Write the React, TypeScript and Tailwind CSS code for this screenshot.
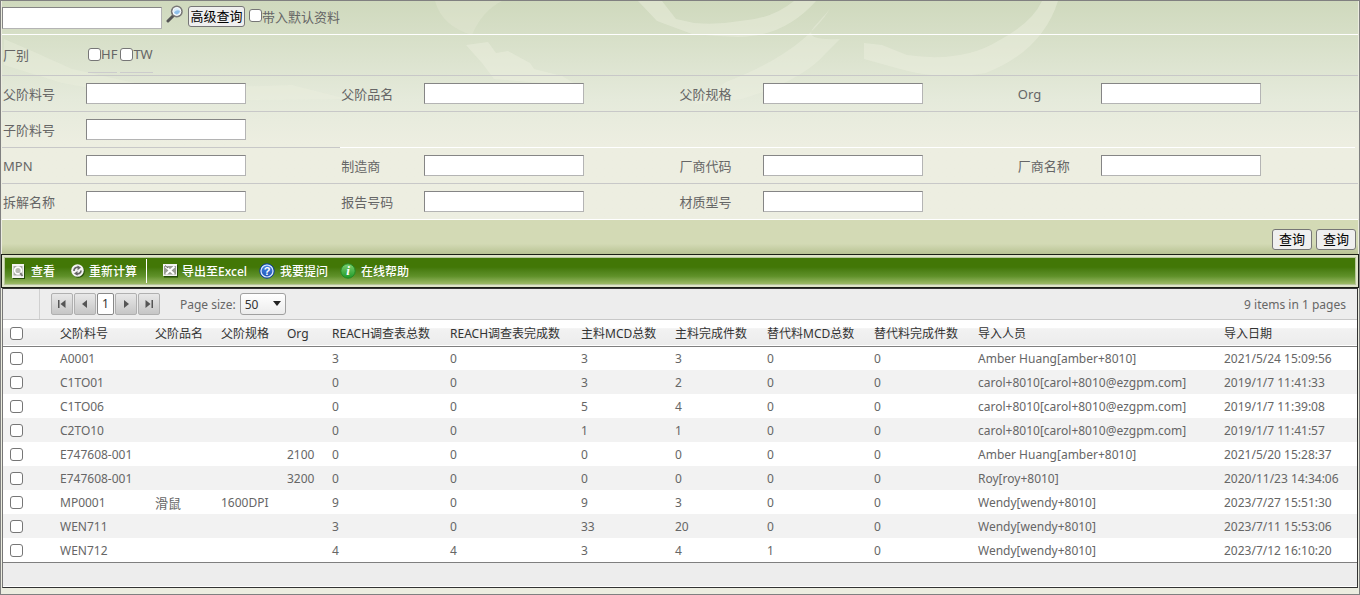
import React from "react";

const searchRows: { fields: string[]; line: string }[] = [
  { fields: ["父阶料号", "父阶品名", "父阶规格", "Org"], line: "border-[#c8c8c8]" },
  { fields: ["子阶料号"], line: "border-white" },
  { fields: ["MPN", "制造商", "厂商代码", "厂商名称"], line: "border-[#c8c8c8]" },
  { fields: ["拆解名称", "报告号码", "材质型号"], line: "border-white" },
];

const columns: [string, string][] = [
  ["父阶料号", "w-[95px]"],
  ["父阶品名", "w-[66px]"],
  ["父阶规格", "w-[66px]"],
  ["Org", "w-[45px]"],
  ["REACH调查表总数", "w-[118px]"],
  ["REACH调查表完成数", "w-[131px]"],
  ["主料MCD总数", "w-[94px]"],
  ["主料完成件数", "w-[92px]"],
  ["替代料MCD总数", "w-[107px]"],
  ["替代料完成件数", "w-[104px]"],
  ["导入人员", "w-auto"],
  ["导入日期", "w-[133px]"],
];

const carol = "carol+8010[carol+8010@ezgpm.com]";
const rows: string[][] = [
  ["A0001", "", "", "", "3", "0", "3", "3", "0", "0", "Amber Huang[amber+8010]", "2021/5/24 15:09:56"],
  ["C1TO01", "", "", "", "0", "0", "3", "2", "0", "0", carol, "2019/1/7 11:41:33"],
  ["C1TO06", "", "", "", "0", "0", "5", "4", "0", "0", carol, "2019/1/7 11:39:08"],
  ["C2TO10", "", "", "", "0", "0", "1", "1", "0", "0", carol, "2019/1/7 11:41:57"],
  ["E747608-001", "", "", "2100", "0", "0", "0", "0", "0", "0", "Amber Huang[amber+8010]", "2021/5/20 15:28:37"],
  ["E747608-001", "", "", "3200", "0", "0", "0", "0", "0", "0", "Roy[roy+8010]", "2020/11/23 14:34:06"],
  ["MP0001", "滑鼠", "1600DPI", "", "9", "0", "9", "3", "0", "0", "Wendy[wendy+8010]", "2023/7/27 15:51:30"],
  ["WEN711", "", "", "", "3", "0", "33", "20", "0", "0", "Wendy[wendy+8010]", "2023/7/11 15:53:06"],
  ["WEN712", "", "", "", "4", "4", "3", "4", "1", "0", "Wendy[wendy+8010]", "2023/7/12 16:10:20"],
];

const box = "block size-[13px] shrink-0 appearance-none rounded-[3px] border border-[#767676] bg-white checked:bg-[#0075ff]";
const textBox =
  "h-[21px] w-[160px] border border-t-[#858585] border-l-[#858585] border-r-[#b4b4b4] border-b-[#b4b4b4] bg-white px-1 text-[13px] outline-none";
const pushButton = "h-[21px] rounded-[3px] border border-[#767676] bg-[#efefef] text-[13px] leading-[19px] text-black";

function Backdrop() {
  return (
    <svg className="pointer-events-none absolute inset-0 -z-10 h-[150px] w-full" viewBox="0 0 1360 150" preserveAspectRatio="xMinYMin slice" aria-hidden="true">
      <g fill="#eef0e0">
        <path opacity=".25" d="M433 0H500Q480 10 470 34Q440 25 433 0Z" />
        <path opacity=".45" d="M464 44L486 41L494 52L506 50L528 62L532 68L560 75L575 84L540 82L492 78L480 62Z" />
        <path opacity=".45" d="M636 0H660L674 18L692 22Q715 24 738 20Q770 18 792 0H814Q782 36 736 36Q712 35 690 33L655 20Z" />
        <path opacity=".4" d="M828 8Q800 52 724 81L690 104L740 98Q800 80 824 52L838 38Q800 40 812 26Z" />
        <path opacity=".45" d="M862 42L880 44L905 54Q960 62 996 40Q1030 22 1040 0H1056Q1040 50 984 72Q940 80 898 68L862 58Z" />
        <path opacity=".35" d="M2 38L30 50L70 68L160 88L290 84L345 98L160 100L60 82L2 64Z" />
      </g>
    </svg>
  );
}

function Magnifier() {
  return (
    <svg width="18" height="18" viewBox="0 0 18 18" aria-hidden="true">
      <path d="M7.500 10.500L2 16" stroke="#555" strokeWidth="3" strokeLinecap="round" />
      <circle cx="10.800" cy="6.400" r="5" fill="#d9ecfa" stroke="#777" strokeWidth="2" />
      <circle cx="10.800" cy="6.400" r="4" fill="none" stroke="#fff" strokeWidth="1" />
      <path d="M8 7.500Q11 4 14 6Q13.500 9 11 9.400Q9 9.300 8 7.500Z" fill="#8fc0ea" />
    </svg>
  );
}

function ViewIcon() {
  return (
    <svg width="13" height="15" viewBox="0 0 13 15" aria-hidden="true">
      <path d="M1 1.500H13V15H1Z" fill="#234b07" />
      <path d="M0 0H12V14H0Z" fill="#f4f4f2" />
      <path d="M1.500 2H10.500V11.500H1.500Z" fill="#a9aca3" />
      <circle cx="6" cy="6.500" r="3.400" fill="#b9bbb4" stroke="#fff" strokeWidth="1.600" />
      <path d="M8.200 9L10.500 12" stroke="#777" strokeWidth="1.600" />
    </svg>
  );
}

function RecalcIcon() {
  return (
    <svg width="14" height="14" viewBox="0 0 14 14" aria-hidden="true">
      <circle cx="7.500" cy="7.500" r="6.200" fill="#234b07" />
      <circle cx="6.500" cy="6.500" r="6.300" fill="#f4f4f4" />
      <path d="M3 7A3.300 3.300 0 0 1 7.500 3.500" fill="none" stroke="#666" strokeWidth="1.700" />
      <path d="M6.500 1.500L10 3.600L6.600 6.200Z" fill="#666" />
      <path d="M10 6.500A3.300 3.300 0 0 1 5.500 9.600" fill="none" stroke="#666" strokeWidth="1.700" />
      <path d="M6.500 7L3 9.600L6.600 11.800Z" fill="#666" />
    </svg>
  );
}

function ExcelIcon() {
  return (
    <svg width="15" height="14" viewBox="0 0 15 14" aria-hidden="true">
      <path d="M1 1H15V13.500H1Z" fill="#234b07" />
      <path d="M0 0H14V12H0Z" fill="#f4f4f4" />
      <path d="M1 2H13V10.500H1Z" fill="#9a9c95" />
      <path d="M2.500 2.500L11 10M11.500 2.500L3 10" stroke="#fff" strokeWidth="2.200" />
      <path d="M2 1.500L5 4" stroke="#666" strokeWidth="1" />
    </svg>
  );
}

function BadgeIcon({ tone, mark }: { tone: "blue" | "green"; mark: string }) {
  const blue = tone === "blue";
  return (
    <svg width="16" height="16" viewBox="0 0 16 16" aria-hidden="true">
      <defs>
        <linearGradient id={tone} x2="0" y2="1">
          <stop stopColor={blue ? "#4b8ae6" : "#7fd070"} />
          <stop offset="1" stopColor={blue ? "#1c50b4" : "#1c9a28"} />
        </linearGradient>
      </defs>
      <circle cx="8" cy="8" r="7.200" fill={"url(#" + tone + ")"} stroke={blue ? "#0d3d94" : "#258a25"} />
      {blue && <circle cx="8" cy="8" r="6" fill="none" stroke="#dce9fb" strokeWidth="1.200" />}
      <text
        x="8"
        y="12"
        textAnchor="middle"
        fill="#fff"
        fontWeight="700"
        fontSize={blue ? "11" : "13"}
        fontStyle={blue ? "normal" : "italic"}
        fontFamily={blue ? "Liberation Sans" : "Liberation Serif"}
      >
        {mark}
      </text>
    </svg>
  );
}

function Tool({ icon, label, className }: { icon: React.ReactNode; label: string; className: string }) {
  return (
    <button type="button" className={"flex shrink-0 items-center whitespace-nowrap text-[12px] font-medium leading-4 text-white " + className}>
      {icon}
      <span className="pt-[2px]">{label}</span>
    </button>
  );
}

function PageButton({ label, d }: { label: string; d: string }) {
  return (
    <button
      type="button"
      aria-label={label}
      className="flex h-[22px] w-[22px] items-center justify-center rounded-[2px] border border-[#b0b0b0] bg-linear-to-b from-[#e8e8e8] to-[#c6c6c6]"
    >
      <svg width="10" height="10" viewBox="0 0 10 10" aria-hidden="true">
        <path d={d} fill="#555" />
      </svg>
    </button>
  );
}

export default function App() {
  return (
    <div className="border border-[#808080] bg-[#ecede0] font-['Noto_Sans','Noto_Sans_CJK_SC',sans-serif] text-[13px] text-[#666]">
      <div className="relative isolate mx-px bg-linear-to-b from-[#cfd9bd] via-[#e5eadb] via-45% to-[#edeee1] to-65%">
        <Backdrop />
        <div className="flex h-[34px] items-start border-b border-white">
          <input aria-label="关键字" className={textBox + " mt-[6px] h-[22px]"} />
          <button type="button" aria-label="搜索" className="mt-1 ml-1">
            <Magnifier />
          </button>
          <button type="button" className={pushButton + " mt-[5px] ml-1 w-[57px]"}>
            高级查询
          </button>
          <label className="mt-2 ml-1 flex leading-4">
            <input type="checkbox" className={box} />
            带入默认资料
          </label>
        </div>
        <div className="flex h-[41px] items-center border-b border-[#c8c8c8] pl-px">
          <span className="w-[85px] pt-px">厂别</span>
          {["HF", "TW"].map((f) => (
            <label key={f} className="mr-[3px] flex h-[36px] items-center border-b border-[#ccc]">
              <input type="checkbox" className={box} />
              {f}
            </label>
          ))}
        </div>
        {searchRows.map((r, i) => (
          <div key={i} className={"grid h-[36px] grid-cols-4 pr-[3px] " + (r.fields.length === 1 ? "" : "border-b " + r.line)}>
            {r.fields.map((f) => (
              <label key={f} className={"flex items-center pl-px " + (r.fields.length === 1 ? "border-b border-[#c8c8c8]" : "")}>
                <span className="w-[83px] pt-[2px]">{f}</span>
                <input type="text" className={textBox} />
              </label>
            ))}
            {r.fields.length === 1 && <div className="col-span-3 border-b border-white" />}
          </div>
        ))}
      </div>
      <div className="mx-px flex h-[34px] items-start justify-end gap-1 bg-linear-to-b from-[#d3dab5] from-70% to-[#b9c394] pt-[9px] pr-[2px]">
        <button type="button" className={pushButton + " w-[40px]"}>查询</button>
        <button type="button" className={pushButton + " w-[40px]"}>查询</button>
      </div>
      <div className="flex h-[34px] flex-col border border-[#1b1f16] bg-[#dfe5c9] p-[2px]">
        <div className="flex flex-1 items-center border border-[#b5c698] bg-linear-to-b from-[#427706] from-35% via-[#5f9129] via-70% to-[#9dbb66] pl-[7px]">
          <Tool icon={<ViewIcon />} label="查看" className="gap-[6px]" />
          <Tool icon={<RecalcIcon />} label="重新计算" className="ml-4 gap-1" />
          <span className="ml-[9px] h-6 w-px bg-white" />
          <Tool icon={<ExcelIcon />} label="导出至Excel" className="ml-4 gap-1" />
          <Tool icon={<BadgeIcon tone="blue" mark="?" />} label="我要提问" className="ml-3 gap-[5px]" />
          <Tool icon={<BadgeIcon tone="green" mark="i" />} label="在线帮助" className="ml-3 gap-[5px]" />
        </div>
      </div>
      <div className="mx-px mb-[6px] border border-[#333] border-l-[#777] bg-white">
        <div className="flex h-[31px] items-stretch border-b border-[#c8c8c8] bg-[#ededed]">
          <span className="w-[37px] border-r border-[#d0d0d0]" />
          <div className="flex flex-1 items-center gap-px pl-[11px] text-[12px]">
            <PageButton label="第一页" d="M1 1H2.500V9H1ZM8.500 1V9L3.500 5Z" />
            <PageButton label="上一页" d="M7 1V9L2 5Z" />
            <button type="button" className="h-[22px] w-[17px] rounded-[2px] border border-[#888] bg-white text-[#333]">1</button>
            <PageButton label="下一页" d="M3 1V9L8 5Z" />
            <PageButton label="最后一页" d="M1.500 1V9L6.500 5ZM7.500 1H9V9H7.500Z" />
            <label className="ml-[19px] flex items-center gap-1">
              <span className="pt-[2px]">Page size:</span>
              <span className="relative">
                <select className="block h-[22px] w-[46px] appearance-none rounded-[3px] border border-[#a0a0a0] bg-linear-to-b from-white to-[#ececec] pt-[2px] pl-1 text-[12px] text-[#333]">
                  <option>50</option>
                  <option>20</option>
                </select>
                <svg className="pointer-events-none absolute top-2 right-[5px]" width="8" height="5" viewBox="0 0 8 5" aria-hidden="true">
                  <path d="M0 0H8L4 5Z" fill="#222" />
                </svg>
              </span>
            </label>
            <span className="mr-[11px] ml-auto pt-[2px]">9 items in 1 pages</span>
          </div>
        </div>
        <table className="w-full table-fixed border-collapse text-left text-[12px] whitespace-nowrap">
          <thead>
            <tr className="h-[26px] border-b border-[#7f7f7f] bg-linear-to-b from-white from-30% via-[#f2f2f2] via-35% to-[#ececec] text-[#333]">
              <th className="w-[57px] p-0 pt-[2px] pl-[7px]">
                <input type="checkbox" aria-label="全选" className={box} />
              </th>
              {columns.map(([name, width]) => (
                <th key={name} className={"p-0 pt-[2px] font-normal " + width}>{name}</th>
              ))}
            </tr>
          </thead>
          <tbody>
            {rows.map((r, i) => (
              <tr key={i} className="h-6 even:bg-[#f2f2f2]">
                <td className="p-0 pl-[7px]">
                  <input type="checkbox" aria-label={"选择 " + r[0]} className={box} />
                </td>
                {r.map((v, j) => (
                  <td key={j} className={"p-0 pt-[2px] " + (j === 1 ? "text-[13px] leading-4" : "leading-4")}>{v}</td>
                ))}
              </tr>
            ))}
          </tbody>
        </table>
        <div className="h-[25px] border-t border-b border-t-[#7f7f7f] border-b-white bg-[#ededed]" />
      </div>
    </div>
  );
}
